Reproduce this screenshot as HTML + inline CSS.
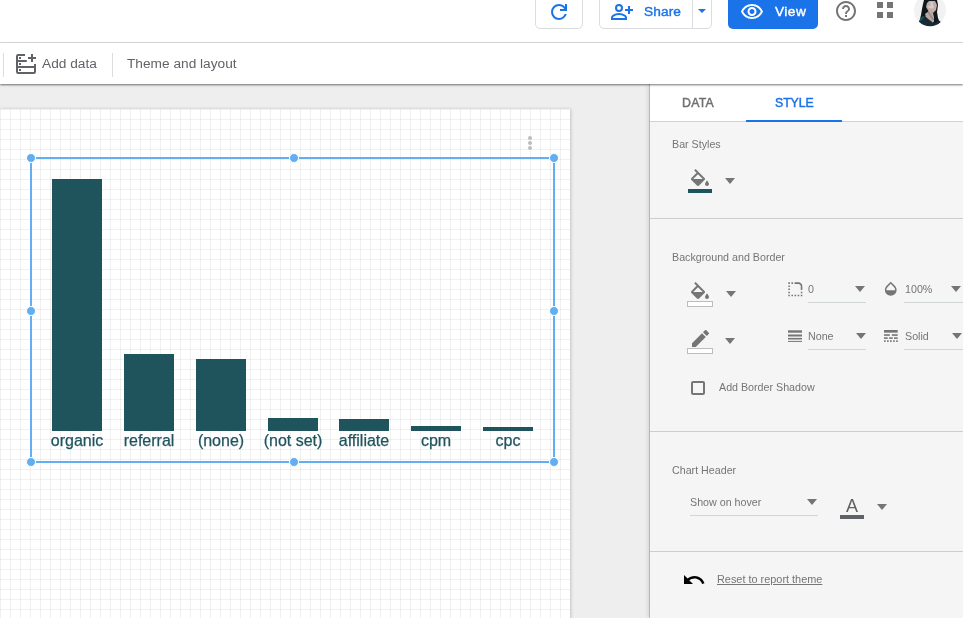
<!DOCTYPE html>
<html><head><meta charset="utf-8">
<style>
*{box-sizing:border-box;margin:0;padding:0}
html,body{width:963px;height:618px;overflow:hidden;background:#fff;font-family:"Liberation Sans",sans-serif}
div,svg{position:absolute}
.t{line-height:1;white-space:nowrap;will-change:transform}
#top{left:0;top:0;width:963px;height:43px;background:#fff;border-bottom:1px solid #dadce0}
#tool{left:0;top:43px;width:963px;height:41px;background:#fff;box-shadow:0 1px 2px rgba(0,0,0,.55);z-index:3}
#canvas{left:0;top:84px;width:650px;height:534px;background:#eeeeee}
#page{left:0;top:25px;width:570px;height:520px;background-color:#fff;
 background-image:linear-gradient(to right,rgba(0,0,0,.055) 1px,transparent 1px),linear-gradient(to bottom,rgba(0,0,0,.055) 1px,transparent 1px);
 background-size:10px 10px;background-position:0 0;box-shadow:1px 0 3px rgba(0,0,0,.18)}
#panel{left:650px;top:84px;width:313px;height:534px;background:#f5f5f5;box-shadow:-1px 0 0 rgba(0,0,0,.15),-2px 0 4px rgba(0,0,0,.12)}
#tabs{left:650px;top:84px;width:313px;height:38px;background:#fff;border-bottom:1px solid #cfd2d2}
.tab{font-size:12.3px;top:97px;letter-spacing:.25px}
.lbl{font-size:10.7px;color:#757575}
.sep{left:650px;width:313px;height:1px;background:#cbcece}
.arr{width:0;height:0;border-left:5px solid transparent;border-right:5px solid transparent;border-top:6px solid #757575}
.ul{height:1px;background:#d0d5d5}
.bar{width:50px;background:#1f545d}
.xl{top:433px;width:100px;text-align:center;font-size:16px;color:#1f545d;-webkit-text-stroke:.25px #1f545d}
.sl{background:#62aef2}
.hd{width:10px;height:10px;border-radius:50%;background:#62aef2;border:1px solid #fff}
.dot{width:4px;height:4px;border-radius:50%;background:#bdbdbd}
.sw{width:26px;height:6px;border:1px solid #bdbdbd;background:#fff}
</style></head><body>
<div id="top"></div>
<!-- top buttons -->
<div style="left:535px;top:-6px;width:48px;height:35px;border:1px solid #dadce0;border-radius:5px"></div>
<svg style="left:547px;top:0" width="24" height="24" viewBox="0 -960 960 960"><path fill="#1a73e8" d="M480-160q-134 0-227-93t-93-227q0-134 93-227t227-93q69 0 132 28.5T720-690v-110h80v280H520v-80h168q-32-56-87.5-88T480-720q-100 0-170 70t-70 170q0 100 70 170t170 70q77 0 139-44t87-116h84q-28 106-114 173t-196 67Z"/></svg>
<div style="left:599px;top:-6px;width:113px;height:35px;border:1px solid #dadce0;border-radius:5px"></div>
<div style="left:692px;top:0;width:1px;height:28px;background:#dadce0"></div>
<svg style="left:610px;top:0" width="24" height="22" viewBox="0 0 24 22"><g fill="none" stroke="#1a73e8" stroke-width="2"><circle cx="9" cy="8" r="3"/><path d="M2 19v-1.3c0-.9.5-1.7 1.3-2.1C5 14.6 7 14 9 14s4 .6 5.7 1.6c.8.4 1.3 1.2 1.3 2.1V19z"/><path d="M15 10h8M19 6v8"/></g></svg>
<div class="t" style="left:644px;top:4.65px;font-size:13.7px;letter-spacing:.1px;color:#1a73e8;-webkit-text-stroke:.4px #1a73e8">Share</div>
<div class="arr" style="left:698px;top:9px;border-width:4px 4px 0 4px;border-top-color:#1a73e8"></div>
<div style="left:728px;top:-6px;width:90px;height:35px;background:#1a73e8;border-radius:5px"></div>
<svg style="left:740px;top:0" width="24" height="24" viewBox="0 0 24 24"><path fill="#fff" d="M12 6c3.79 0 7.17 2.13 8.82 5.5C19.170 14.87 15.79 17 12 17s-7.17-2.13-8.82-5.5C4.83 8.13 8.21 6 12 6m0-2C7 4 2.73 7.11 1 11.5 2.73 15.89 7 19 12 19s9.27-3.11 11-7.5C21.27 7.11 17 4 12 4zm0 5c1.38 0 2.5 1.12 2.5 2.5S13.38 14 12 14s-2.5-1.12-2.5-2.5S10.62 9 12 9m0-2c-2.48 0-4.5 2.020-4.5 4.5S9.52 16 12 16s4.5-2.02 4.5-4.5S14.48 7 12 7z"/></svg>
<div class="t" style="left:774.5px;top:4.65px;font-size:13.7px;color:#fff;-webkit-text-stroke:.4px #fff;letter-spacing:.45px">View</div>
<svg style="left:834px;top:-1px" width="24" height="24" viewBox="0 0 24 24"><path fill="#757575" d="M11 18h2v-2h-2v2zm1-16C6.48 2 2 6.48 2 12s4.48 10 10 10 10-4.48 10-10S17.52 2 12 2zm0 18c-4.41 0-8-3.59-8-8s3.59-8 8-8 8 3.59 8 8-3.59 8-8 8zm0-14c-2.21 0-4 1.79-4 4h2c0-1.1.9-2 2-2s2 .9 2 2c0 2-3 1.75-3 5h2c0-2.25 3-2.5 3-5 0-2.21-1.79-4-4-4z"/></svg>
<div style="left:877px;top:2px;width:6px;height:6px;background:#757575"></div>
<div style="left:887px;top:2px;width:6px;height:6px;background:#757575"></div>
<div style="left:877px;top:12px;width:6px;height:6px;background:#757575"></div>
<div style="left:887px;top:12px;width:6px;height:6px;background:#757575"></div>
<svg style="left:914px;top:0" width="32" height="28" viewBox="0 0 32 28"><defs><clipPath id="av"><circle cx="16" cy="10.2" r="16"/></clipPath></defs><g clip-path="url(#av)"><rect x="0" y="-8" width="32" height="36" fill="#f2f2f2"/><path d="M10 0H23L24 5 23 12 24 18 26 23 22 24 17 22 11 16 6 19 7 15 8 9 9 4Z" fill="#10171c"/><path d="M15 1 21 1 23 5 22 10 19 13 15 12 12 7 13 3Z" fill="#c7aca3"/><path d="M16 2 18.5 2 19 5 20 8 17 8.5 13.5 7 15 5.5 17 6Z" fill="#ccd0d2"/><path d="M11 14 15 11 19 13 20 17 20 22 18 22 12 17Z" fill="#c2a69e"/><path d="M13 12 15 12 20 19 19 21Z" fill="#8d9092"/><path d="M4 24 6 19 9 16 11 16 14 19 19 23 22 23 24 20 27 22 28 28 4 28Z" fill="#172a37"/><path d="M6 19 9 16 10 17 8 20 6 21Z" fill="#1f5361"/></g></svg>

<div id="tool"></div>
<div style="left:3px;top:53px;width:1px;height:24px;background:#dadce0;z-index:4"></div>
<svg style="left:16px;top:54px;z-index:4" width="20" height="20" viewBox="0 0 20 20"><g fill="none" stroke="#5f6368" stroke-width="2"><path d="M9 1H2.2Q1 1 1 2.2V17.8Q1 19 2.2 19H17.8Q19 19 19 17.8V10"/><path d="M1 7H10.8M1 13H19M12 4H20M16 0V8"/></g><g fill="#5f6368"><rect x="3" y="3" width="2" height="2"/><rect x="3" y="9" width="2" height="2"/><rect x="3" y="15" width="2" height="2"/></g></svg>
<div class="t" style="left:42.3px;top:57.2px;font-size:13.7px;color:#5f6368;z-index:4">Add data</div>
<div style="left:112px;top:53px;width:1px;height:24px;background:#dadce0;z-index:4"></div>
<div class="t" style="left:127.3px;top:57.2px;font-size:13.7px;color:#5f6368;z-index:4">Theme and layout</div>

<div id="canvas"><div id="page"></div></div>

<!-- chart -->
<div class="bar" style="left:52px;top:179px;height:252px"></div>
<div class="bar" style="left:124px;top:354px;height:77px"></div>
<div class="bar" style="left:196px;top:359px;height:72px"></div>
<div class="bar" style="left:268px;top:418px;height:13px"></div>
<div class="bar" style="left:339px;top:419px;height:12px"></div>
<div class="bar" style="left:411px;top:426px;height:5px"></div>
<div class="bar" style="left:483px;top:427px;height:4px"></div>
<div class="t xl" style="left:27px">organic</div>
<div class="t xl" style="left:99px">referral</div>
<div class="t xl" style="left:171px">(none)</div>
<div class="t xl" style="left:243px">(not set)</div>
<div class="t xl" style="left:314px">affiliate</div>
<div class="t xl" style="left:386px">cpm</div>
<div class="t xl" style="left:458px">cpc</div>
<div class="sl" style="left:30px;top:157px;width:525px;height:2px"></div>
<div class="sl" style="left:30px;top:461px;width:525px;height:2px"></div>
<div class="sl" style="left:30px;top:157px;width:2px;height:306px"></div>
<div class="sl" style="left:553px;top:157px;width:2px;height:306px"></div>
<div class="hd" style="left:26px;top:153px"></div>
<div class="hd" style="left:289px;top:153px"></div>
<div class="hd" style="left:549px;top:153px"></div>
<div class="hd" style="left:26px;top:306px"></div>
<div class="hd" style="left:549px;top:306px"></div>
<div class="hd" style="left:26px;top:457px"></div>
<div class="hd" style="left:289px;top:457px"></div>
<div class="hd" style="left:549px;top:457px"></div>
<div class="dot" style="left:528px;top:136px"></div>
<div class="dot" style="left:528px;top:141px"></div>
<div class="dot" style="left:528px;top:146px"></div>

<!-- panel -->
<div id="panel"></div>
<div id="tabs"></div>
<div class="t tab" style="left:682px;color:#707070;-webkit-text-stroke:.45px #707070">DATA</div>
<div class="t tab" style="left:775px;letter-spacing:-.05px;color:#1a73e8;-webkit-text-stroke:.45px #1a73e8">STYLE</div>
<div style="left:746px;top:120px;width:96px;height:2px;background:#1a73e8"></div>

<div class="t lbl" style="left:672px;top:138.5px">Bar Styles</div>
<svg style="left:688px;top:169px" width="24" height="24" viewBox="0 0 24 24"><path fill="#757575" d="M16.56 8.94L7.62 0 6.21 1.41l2.38 2.38-5.15 5.15c-.59.59-.59 1.54 0 2.12l5.5 5.5c.29.29.68.44 1.06.44s.77-.15 1.06-.44l5.5-5.5c.59-.58.59-1.53 0-2.12zM5.21 10L10 5.21 14.79 10H5.21zM19 11.5s-2 2.17-2 3.5c0 1.1.9 2 2 2s2-.9 2-2c0-1.33-2-3.5-2-3.5z"/></svg>
<div style="left:688px;top:189px;width:24px;height:4px;background:#1f545d"></div>
<div class="arr" style="left:725px;top:178px"></div>
<div class="sep" style="top:218px"></div>

<div class="t lbl" style="left:672px;top:251.7px">Background and Border</div>
<svg style="left:688px;top:282px" width="24" height="24" viewBox="0 0 24 24"><path fill="#757575" d="M16.56 8.94L7.62 0 6.21 1.41l2.38 2.38-5.15 5.15c-.59.59-.59 1.54 0 2.12l5.5 5.5c.29.29.68.44 1.06.44s.77-.15 1.06-.44l5.5-5.5c.59-.58.59-1.53 0-2.12zM5.21 10L10 5.21 14.79 10H5.21zM19 11.5s-2 2.17-2 3.5c0 1.1.9 2 2 2s2-.9 2-2c0-1.33-2-3.5-2-3.5z"/></svg>
<div class="sw" style="left:687px;top:301px"></div>
<div class="arr" style="left:725.5px;top:290.5px"></div>

<svg style="left:785.7px;top:279.7px" width="18.67" height="18.67" viewBox="0 0 24 24"><path fill="#757575" d="M19 19h2v2h-2v-2zm0-2h2v-2h-2v2zM3 13h2v-2H3v2zm0 4h2v-2H3v2zm0-8h2V7H3v2zm0-4h2V3H3v2zm4 0h2V3H7v2zm8 16h2v-2h-2v2zm-4 0h2v-2h-2v2zm4 0h2v-2h-2v2zm-8 0h2v-2H7v2zm-4 0h2v-2H3v2zM21 8c0-2.760-2.24-5-5-5h-5v2h5c1.65 0 3 1.35 3 3v5h2V8z"/></svg>
<div class="t lbl" style="left:808px;top:283.6px">0</div>
<div class="arr" style="left:855.3px;top:285.5px"></div>
<div class="ul" style="left:808px;top:302px;width:58px"></div>

<svg style="left:882.3px;top:280.2px" width="17.5" height="17.5" viewBox="0 0 24 24"><path fill="#757575" d="M17.66 8L12 2.35 6.34 8C4.78 9.56 4 11.64 4 13.64s.78 4.11 2.34 5.67 3.61 2.35 5.66 2.35 4.1-.79 5.66-2.350S20 15.64 20 13.64 19.22 9.56 17.66 8zM6 14c.01-2 .62-3.27 1.76-4.4L12 5.27l4.24 4.38C17.38 10.77 17.99 12 18 14H6z"/></svg>
<div class="t lbl" style="left:904.5px;top:283.6px">100%</div>
<div class="arr" style="left:951.3px;top:285.5px"></div>
<div class="ul" style="left:904px;top:302px;width:59px"></div>

<svg style="left:688px;top:330px" width="24" height="24" viewBox="0 0 24 24"><path fill="#757575" d="M17.75 7L14 3.25l-10 10V17h3.75l10-10zm2.96-2.96c.39-.39.39-1.02 0-1.41L18.37.29c-.39-.39-1.02-.39-1.41 0L15 2.25 18.75 6l1.96-1.96z"/></svg>
<div class="sw" style="left:687px;top:348px"></div>
<div class="arr" style="left:725.3px;top:337.5px"></div>

<svg style="left:788px;top:329px" width="14" height="14" viewBox="0 0 14 14"><g fill="#757575"><rect x="0" y="1.3" width="14" height="2.4"/><rect x="0" y="5.5" width="14" height="2"/><rect x="0" y="8.9" width="14" height="1.6"/><rect x="0" y="11.9" width="14" height="1"/></g></svg>
<div class="t lbl" style="left:808px;top:330.6px">None</div>
<div class="arr" style="left:855.5px;top:333px"></div>
<div class="ul" style="left:808px;top:349px;width:58px"></div>

<svg style="left:884.1px;top:329px" width="14" height="14" viewBox="0 0 14 14"><g fill="#757575"><rect x="0" y="1" width="13.7" height="2.65"/><rect x="0" y="5.25" width="5.8" height="1.6"/><rect x="7.9" y="5.25" width="5.8" height="1.6"/><rect x="0" y="8.3" width="3.7" height="1.6"/><rect x="5.1" y="8.3" width="3.6" height="1.6"/><rect x="10" y="8.3" width="3.7" height="1.6"/><rect x="0" y="11.3" width="1.7" height="1.6"/><rect x="3" y="11.3" width="1.7" height="1.6"/><rect x="6" y="11.3" width="1.7" height="1.6"/><rect x="9.1" y="11.3" width="1.7" height="1.6"/><rect x="12.1" y="11.3" width="1.7" height="1.6"/></g></svg>
<div class="t lbl" style="left:904.5px;top:330.6px">Solid</div>
<div class="arr" style="left:951.5px;top:333px"></div>
<div class="ul" style="left:904px;top:349px;width:59px"></div>

<div style="left:691px;top:381px;width:14px;height:14px;border:2px solid #757575;border-radius:2px"></div>
<div class="t lbl" style="left:718.5px;top:381.6px">Add Border Shadow</div>
<div class="sep" style="top:431px"></div>

<div class="t lbl" style="left:672px;top:464.9px">Chart Header</div>
<div class="t lbl" style="left:689.5px;top:496.8px">Show on hover</div>
<div class="arr" style="left:807.3px;top:498.5px"></div>
<div class="ul" style="left:690px;top:515px;width:128px"></div>
<div class="t" style="left:846px;top:497px;font-size:18px;color:#616161">A</div>
<div style="left:840px;top:515px;width:24px;height:4px;background:#5f6368"></div>
<div class="arr" style="left:877.3px;top:504px"></div>
<div class="sep" style="top:551px"></div>

<svg style="left:682px;top:568px" width="24" height="24" viewBox="0 0 24 24"><path fill="#000" d="M12.5 8c-2.65 0-5.05.99-6.9 2.6L2 7v9h9l-3.62-3.62c1.39-1.16 3.16-1.88 5.12-1.88 3.54 0 6.55 2.31 7.6 5.5l2.37-.78C21.08 11.03 17.15 8 12.5 8z"/></svg>
<div class="t lbl" style="left:716.5px;top:573.6px;text-decoration:underline;font-size:10.9px">Reset to report theme</div>
</body></html>
